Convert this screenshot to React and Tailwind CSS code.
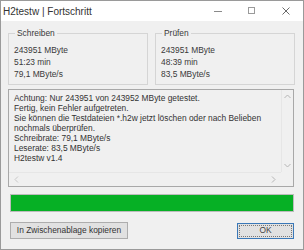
import React from "react";

const body = { fontFamily: '"Liberation Sans", Arial, sans-serif' };

function Group({ title, lines }) {
  return (
    <fieldset className="w-[140px] h-[57px] border border-[#d5d5d5] px-[5px] pb-[4px]">
      <legend className="ml-[1px] px-[2px] leading-[11px] text-[#3a3a3a]">{title}</legend>
      <div className="mt-[5px] leading-[12px] text-[#3a3a3a]">
        {lines.map((l) => (
          <div key={l}>{l}</div>
        ))}
      </div>
    </fieldset>
  );
}

export default function App() {
  const log = [
    "Achtung: Nur 243951 von 243952 MByte getestet.",
    "Fertig, kein Fehler aufgetreten.",
    "Sie können die Testdateien *.h2w jetzt löschen oder nach Belieben",
    "nochmals überprüfen.",
    "Schreibrate: 79,1 MByte/s",
    "Leserate: 83,5 MByte/s",
    "H2testw v1.4",
  ];

  return (
    <div className="w-[304px] h-[250px] border border-[#9a9a9a] bg-[#f0f0f0] flex flex-col overflow-hidden">
      {/* title bar */}
      <div className="h-[20px] bg-white flex items-center pl-[2px] shrink-0">
        <span className="text-[10px] text-[#333]" style={{ fontFamily: '"Liberation Sans", sans-serif' }}>
          H2testw | Fortschritt
        </span>
        <div className="ml-auto flex items-center h-full">
          <svg width="34" height="20" viewBox="0 0 34 20" className="block">
            <line x1="13" y1="10.5" x2="21" y2="10.5" stroke="#8a8a8a" strokeWidth="1" />
          </svg>
          <svg width="34" height="20" viewBox="0 0 34 20" className="block">
            <rect x="13.5" y="6.5" width="6" height="6" fill="none" stroke="#9a9a9a" strokeWidth="1" />
          </svg>
          <svg width="34" height="20" viewBox="0 0 34 20" className="block">
            <path d="M13.5 6.5 L20.5 13.5 M20.5 6.5 L13.5 13.5" stroke="#6a6a6a" strokeWidth="1" />
          </svg>
        </div>
      </div>

      <div className="flex flex-col px-[7px] text-[8.4px]" style={body}>
        <div className="flex gap-[7px] mt-[7px]">
          <Group title="Schreiben" lines={["243951 MByte", "51:23 min", "79,1 MByte/s"]} />
          <Group title="Prüfen" lines={["243951 MByte", "48:39 min", "83,5 MByte/s"]} />
        </div>

        {/* log box */}
        <div className="mt-[4px] w-[286px] h-[98px] border border-[#a8a8a8] bg-[#f0f0f0] flex flex-col">
          <div className="flex flex-1 min-h-0">
            <div className="flex-1 pl-[5px] pt-[3px] leading-[10px] text-[#333] whitespace-nowrap overflow-hidden">
              {log.map((l) => (
                <div key={l}>{l}</div>
              ))}
            </div>
            <div className="w-[12px] border-l border-[#e6e6e6] flex flex-col items-center justify-between py-[4px]">
              <svg width="7" height="5" viewBox="0 0 7 5"><path d="M0.5 4 L3.5 1 L6.5 4" fill="none" stroke="#b5b5b5" /></svg>
              <svg width="7" height="5" viewBox="0 0 7 5"><path d="M0.5 1 L3.5 4 L6.5 1" fill="none" stroke="#b5b5b5" /></svg>
            </div>
          </div>
          <div className="h-[14px] flex shrink-0">
            <div className="flex-1 border-t border-[#e6e6e6] flex items-center justify-between px-[5px]">
              <svg width="5" height="7" viewBox="0 0 5 7"><path d="M4 0.5 L1 3.5 L4 6.5" fill="none" stroke="#c8c8c8" /></svg>
              <svg width="5" height="7" viewBox="0 0 5 7"><path d="M1 0.5 L4 3.5 L1 6.5" fill="none" stroke="#b5b5b5" /></svg>
            </div>
            <div className="w-[12px] bg-[#f0f0f0]" />
          </div>
        </div>

        {/* progress */}
        <div className="mt-[7px] ml-[2px] w-[284px] h-[18px] border border-[#bcbcbc] bg-[#e6e6e6]">
          <div className="h-full w-full bg-[#06b025]" />
        </div>

        {/* buttons */}
        <div className="mt-[10px] ml-[2px] w-[284px] flex items-center justify-between">
          <button className="w-[118px] h-[17px] border border-[#adadad] bg-[#e1e1e1] text-[#333] leading-none">
            In Zwischenablage kopieren
          </button>
          <button className="w-[57px] h-[16px] border border-[#3a78b8] bg-[#e1e1e1] text-[#444] leading-none outline outline-1 outline-dotted outline-[#777] -outline-offset-[3px]">
            OK
          </button>
        </div>
      </div>
    </div>
  );
}
